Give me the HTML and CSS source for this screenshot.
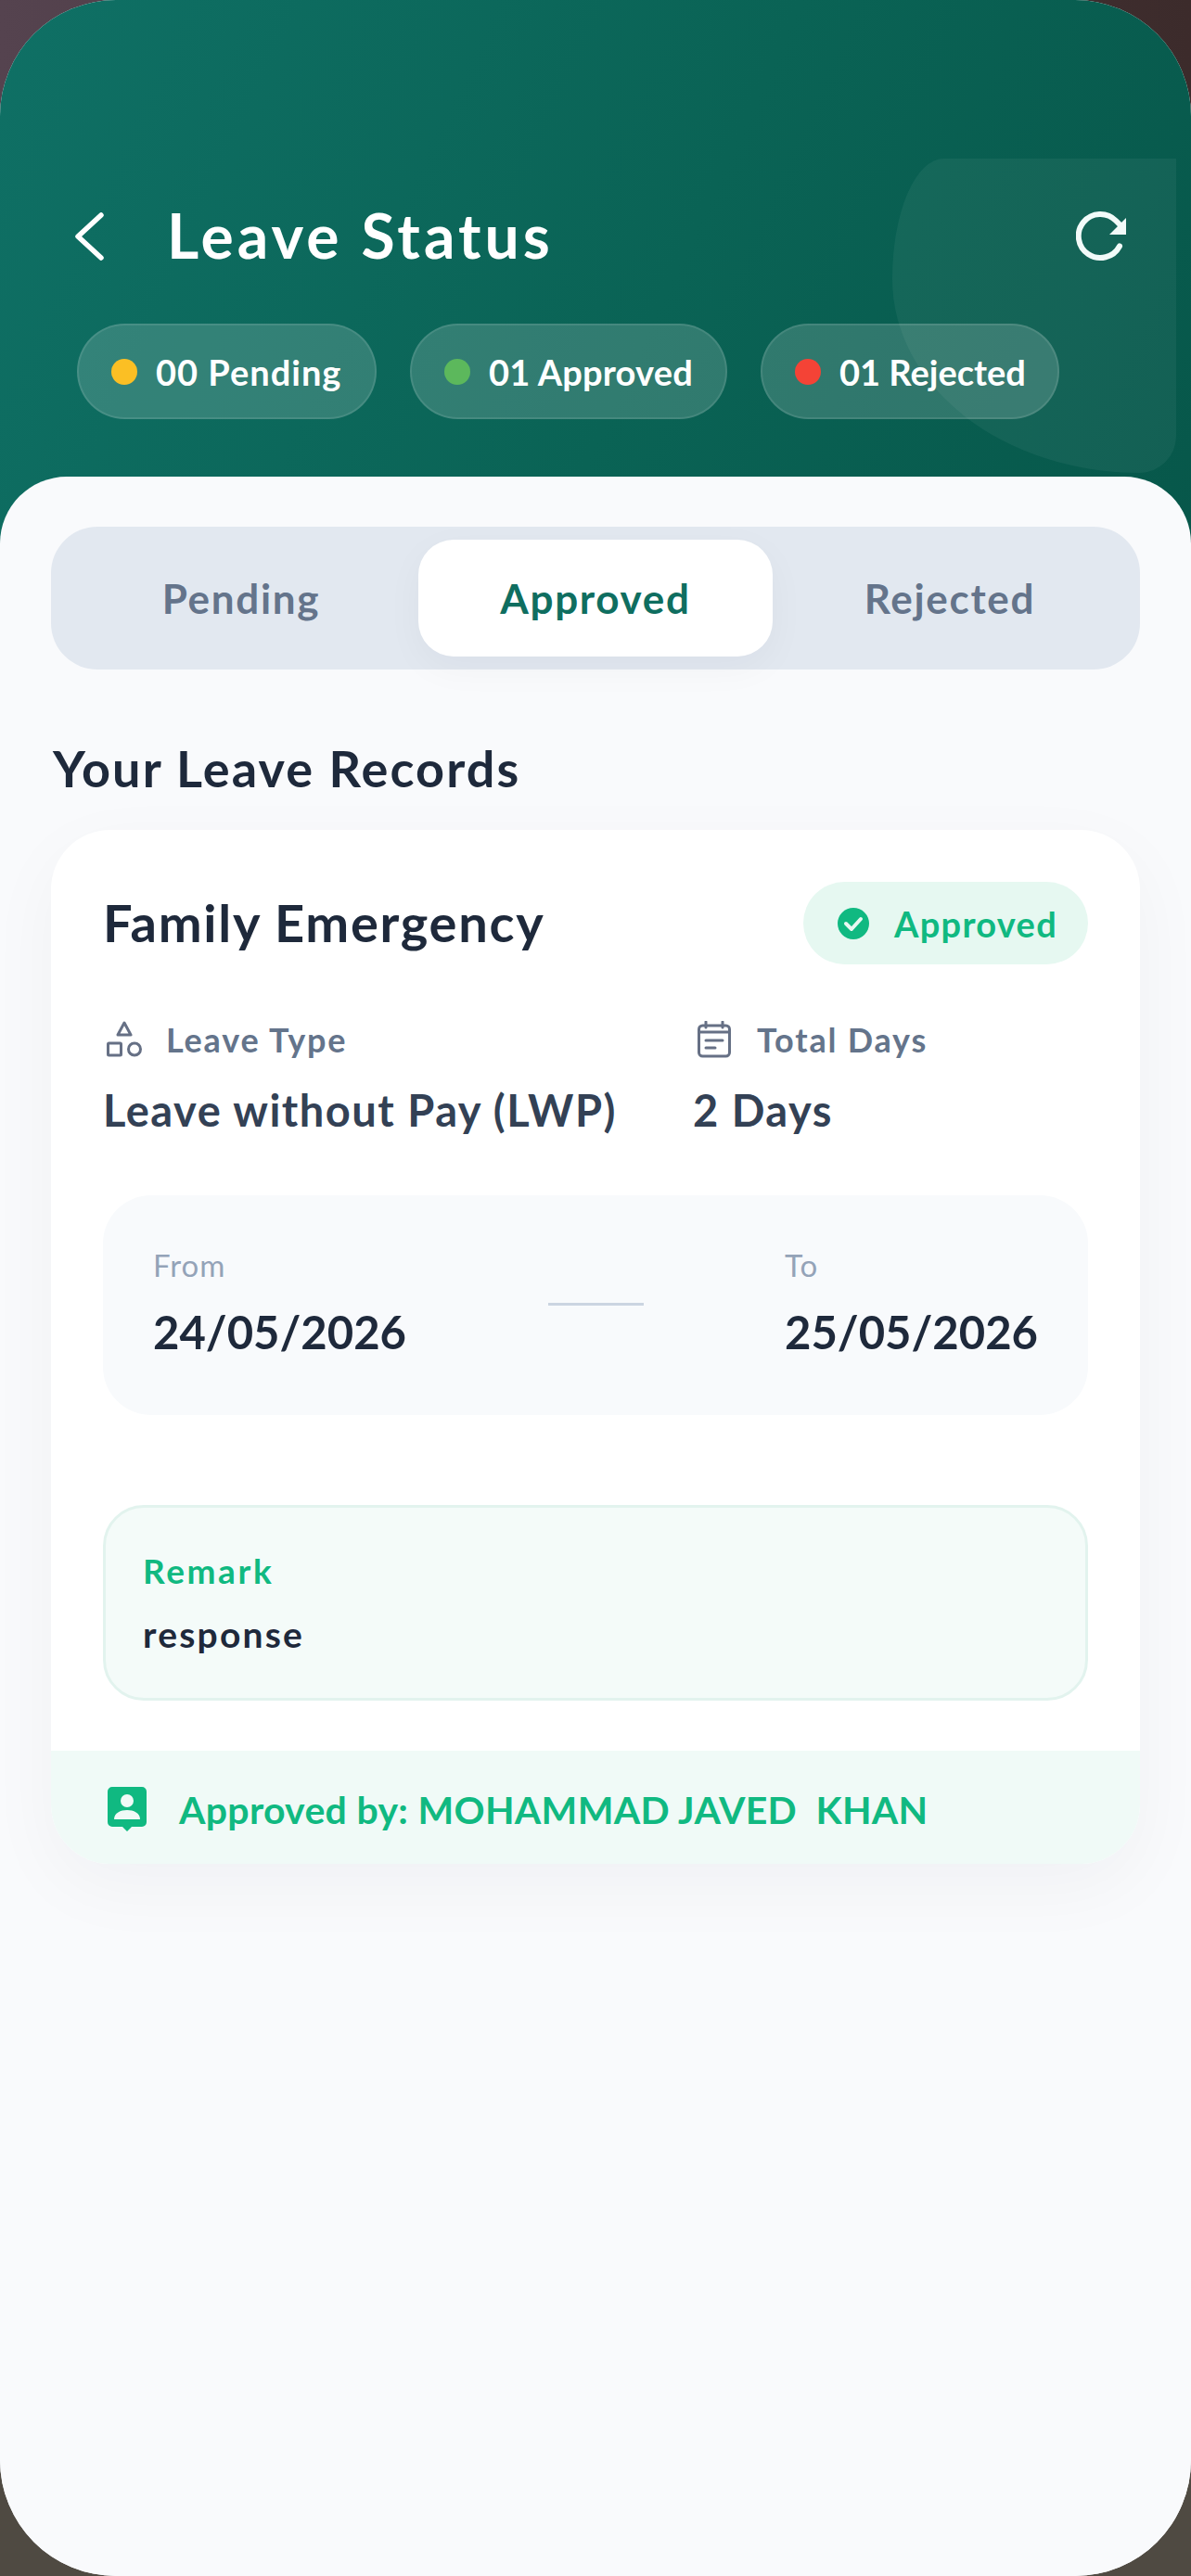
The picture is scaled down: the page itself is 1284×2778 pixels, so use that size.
FILE: index.html
```html
<!DOCTYPE html>
<html lang="en">
<head>
<meta charset="utf-8">
<title>Leave Status</title>
<link rel="stylesheet" href="styles.css">
</head>
<body>
<div class="phone">
  <header class="header">
    <div class="blob"></div>
    <div class="topbar">
      <svg class="back" viewBox="0 0 32 52" fill="none"><path d="M29 3 4 26l25 23" stroke="#fff" stroke-width="5.5" stroke-linecap="round" stroke-linejoin="round"/></svg>
      <h1 class="title">Leave Status</h1>
      <svg class="refresh" viewBox="0 0 56 56" fill="none"><path d="M47 38.500A23.500 23.500 0 1 1 43 11l6 6" stroke="#f2fbf9" stroke-width="6" stroke-linecap="round"/><path d="M54 8v18H36z" fill="#f2fbf9"/></svg>
    </div>
    <div class="chips">
      <div class="chip c1"><span class="dot yellow"></span>00 Pending</div>
      <div class="chip c2"><span class="dot green"></span>01 Approved</div>
      <div class="chip c3"><span class="dot red"></span>01 Rejected</div>
    </div>
  </header>
  <main class="sheet">
    <div class="tabs">
      <div class="tab">Pending</div>
      <div class="tab active">Approved</div>
      <div class="tab">Rejected</div>
    </div>
    <h2 class="section">Your Leave Records</h2>
    <article class="card">
      <div class="card-body">
        <div class="card-head">
          <div class="reason">Family Emergency</div>
          <div class="badge">
            <svg class="badge-icon" viewBox="0 0 36 36"><circle cx="18" cy="18" r="17" fill="#10b981"/><path d="m10 18 6 6 10-11" fill="none" stroke="#e8f8f2" stroke-width="4" stroke-linecap="round" stroke-linejoin="round"/></svg>
            Approved
          </div>
        </div>
        <div class="info">
          <div class="label">
            <svg class="label-icon shapes" viewBox="0 0 38 40" fill="none" stroke="#667085" stroke-width="3"><path d="M19 2 26 15H12z" stroke-linejoin="round"/><rect x="1.500" y="24" width="14" height="13" rx="1"/><circle cx="30" cy="30.500" r="6.500"/></svg>
            Leave Type
          </div>
          <div class="label second">
            <svg class="label-icon" viewBox="0 0 36 40" fill="none" stroke="#667085" stroke-width="3"><rect x="1.500" y="5" width="33" height="33" rx="4"/><path d="M1.500 12h33M9 1v6M27 1v6M9 21h18M9 29h10" stroke-linecap="round"/></svg>
            Total Days
          </div>
          <div class="value">Leave without Pay (LWP)</div>
          <div class="value second-value">2 Days</div>
        </div>
        <div class="dates">
          <div>
            <div class="date-label">From</div>
            <div class="date-value">24/05/2026</div>
          </div>
          <div class="rule"></div>
          <div>
            <div class="date-label">To</div>
            <div class="date-value">25/05/2026</div>
          </div>
        </div>
        <div class="remark">
          <div class="remark-label">Remark</div>
          <div class="remark-text">response</div>
        </div>
      </div>
      <div class="card-foot">
        <svg class="foot-icon" viewBox="0 0 42 48"><path d="M5 0h32a5 5 0 0 1 5 5v33a5 5 0 0 1-5 5h-11l-5 5-5-5H5a5 5 0 0 1-5-5V5a5 5 0 0 1 5-5z" fill="#10b981"/><circle cx="21" cy="15" r="7" fill="#f0faf7"/><path d="M7 35c0-7 7-10 14-10s14 3 14 10z" fill="#f0faf7"/></svg>
        <span>Approved by: MOHAMMAD JAVED&nbsp; KHAN</span>
      </div>
    </article>
  </main>
</div>
</body>
</html>
```
FILE: styles.css
```css
* { box-sizing: border-box; }
html, body { margin: 0; padding: 0; }
body {
  width: 1284px;
  height: 2778px;
  overflow: hidden;
  font-family: "Lato", "Noto Sans", sans-serif;
  background:
    linear-gradient(90deg, #55434f 0%, #3c2b2b 100%) top / 100% 300px no-repeat,
    #4f4a42;
}
.phone {
  width: 1284px;
  height: 2778px;
  border-radius: 125px;
  overflow: hidden;
  display: flex;
  flex-direction: column;
  background: #f9fafc;
}
.header {
  position: relative;
  height: 614px;
  flex: none;
  padding: 220px 68px 0 80px;
  background: linear-gradient(115deg, #0f7065 0%, #0a6355 55%, #07574a 100%);
  color: #fff;
}
.blob {
  position: absolute;
  left: 962px;
  top: 171px;
  width: 306px;
  height: 339px;
  background: rgba(255,255,255,.05);
  border-radius: 56px 0 40px 268px / 130px 0 40px 210px;
}
.topbar {
  position: relative;
  display: flex;
  align-items: center;
  height: 66px;
}
.back { width: 32px; height: 52px; flex: none; margin-top: 4px; }
.title {
  margin: 0 0 0 68px;
  font-size: 66px;
  letter-spacing: 4px;
  font-weight: 700;
  flex: 1;
}
.refresh { width: 56px; height: 56px; flex: none; margin-top: 4px; }
.chips {
  position: relative;
  display: flex;
  gap: 36px;
  margin: 63px 0 0 3px;
}
.chip {
  height: 103px;
  border-radius: 52px;
  background: rgba(255,255,255,.16);
  border: 2px solid rgba(255,255,255,.1);
  display: flex;
  align-items: center;
  padding-left: 35px;
  gap: 20px;
  font-size: 38px;
  font-weight: 700;
  white-space: nowrap;
}
.c1 { width: 323px; letter-spacing: 1px; }
.c2 { width: 342px; letter-spacing: .2px; }
.c3 { width: 322px; letter-spacing: 0; }
.dot { width: 28px; height: 28px; border-radius: 50%; flex: none; }
.yellow { background: #fbbf24; }
.green { background: #5cb85c; }
.red { background: #f44336; }
.sheet {
  flex: 1;
  margin-top: -100px;
  padding: 54px 55px 0;
  background: #f9fafc;
  border-radius: 72px 72px 0 0;
  position: relative;
}
.tabs {
  display: grid;
  grid-template-columns: repeat(3, 1fr);
  height: 154px;
  padding: 14px;
  background: #e2e8f0;
  border-radius: 50px;
}
.tab {
  display: flex;
  align-items: center;
  justify-content: center;
  font-size: 44px;
  letter-spacing: 1.7px;
  font-weight: 700;
  color: #64748b;
}
.tab.active {
  background: #fff;
  border-radius: 38px;
  color: #0f6e60;
  box-shadow: 0 12px 40px rgba(15,23,42,.04);
}
.section {
  margin: 76px 0 0 2px;
  height: 97px;
  font-size: 54px;
  letter-spacing: 2.1px;
  line-height: 62px;
  font-weight: 700;
  color: #1e293b;
}
.card {
  background: #fff;
  border-radius: 64px;
  overflow: hidden;
  box-shadow: 0 24px 80px rgba(15,23,42,.04);
}
.card-body { padding: 54px 56px 54px; }
.card-head {
  display: flex;
  justify-content: space-between;
  align-items: center;
  height: 89px;
  margin-top: 2px;
}
.reason { font-size: 56px; letter-spacing: 1.7px; font-weight: 700; color: #1e293b; margin-top: -2px; }
.badge {
  display: flex;
  align-items: center;
  gap: 26px;
  width: 307px;
  height: 89px;
  padding-left: 36px;
  border-radius: 45px;
  background: #e6f8f1;
  color: #10b981;
  font-size: 38px;
  letter-spacing: 1.3px;
  font-weight: 700;
}
.badge-icon { width: 36px; height: 36px; flex: none; }
.info {
  display: grid;
  grid-template-columns: 636px 1fr;
  margin-top: 58px;
  row-gap: 23px;
}
.label {
  display: flex;
  align-items: center;
  gap: 26px;
  height: 46px;
  font-size: 36px;
  letter-spacing: 1.8px;
  font-weight: 700;
  color: #64748b;
}
.second { margin-left: 5px; gap: 28px; }
.shapes { margin-left: 4px; }
.label-icon { width: auto; height: 40px; flex: none; }
.value { font-size: 47px; letter-spacing: 1.5px; line-height: 60px; font-weight: 700; color: #334155; }
.dates {
  display: flex;
  justify-content: space-between;
  align-items: center;
  height: 237px;
  margin-top: 62px;
  padding: 0 54px 8px;
  background: #f8fafc;
  border-radius: 52px;
}
.date-label { font-size: 33px; letter-spacing: 1px; color: #94a3b8; font-weight: 400; line-height: 44px; }
.date-value { font-size: 49px; font-weight: 700; color: #1e293b; line-height: 60px; margin-top: 20px; }
.rule { width: 103px; height: 3px; background: #cbd5e1; margin-top: 6px; }
.remark {
  height: 211px;
  margin-top: 97px;
  padding: 43px 40px 0;
  background: #f4fbf9;
  border: 3px solid #e2f3ee;
  border-radius: 44px;
}
.remark-label { font-size: 37px; letter-spacing: 2.6px; line-height: 50px; font-weight: 700; color: #10b981; }
.remark-text { font-size: 39px; letter-spacing: 2.2px; line-height: 50px; font-weight: 700; color: #1e293b; margin-top: 18px; }
.card-foot {
  display: flex;
  align-items: center;
  gap: 35px;
  height: 122px;
  padding: 4px 0 0 61px;
  background: #f0faf7;
  color: #10b981;
  font-size: 41px;
  letter-spacing: .3px;
  font-weight: 700;
}
.foot-icon { width: 42px; height: 48px; flex: none; }
```
